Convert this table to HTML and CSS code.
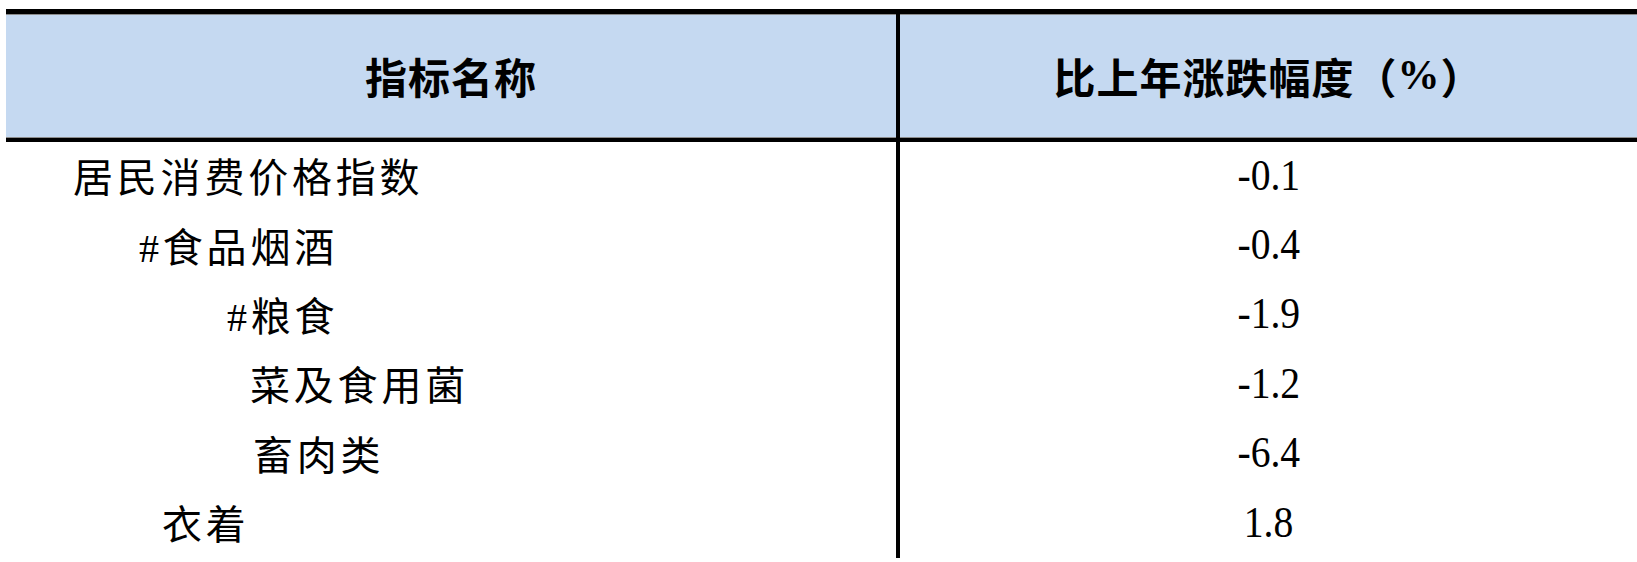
FILE: index.html
```html
<!DOCTYPE html>
<html lang="zh-CN">
<head>
<meta charset="utf-8">
<title>居民消费价格指数</title>
<link rel="stylesheet" href="styles.css">
</head>
<body>
<div class="table">
  <div class="head-row">
    <div class="hcell">指标名称</div>
    <div class="hcell hcell-right">比上年涨跌幅度（<span class="pct">%</span>）</div>
  </div>
  <div class="body">
    <div class="name lv1">居民消费价格指数</div><div class="val"><span class="num">-0.1</span></div>
    <div class="name lv2">#食品烟酒</div><div class="val"><span class="num">-0.4</span></div>
    <div class="name lv3">#粮食</div><div class="val"><span class="num">-1.9</span></div>
    <div class="name lv4">菜及食用菌</div><div class="val"><span class="num">-1.2</span></div>
    <div class="name lv5">畜肉类</div><div class="val"><span class="num">-6.4</span></div>
    <div class="name lv6">衣着</div><div class="val"><span class="num">1.8</span></div>
  </div>
</div>
</body>
</html>
```

FILE: styles.css
```css
html, body {
  margin: 0;
  padding: 0;
  background: #fff;
}
body {
  width: 1637px;
  height: 562px;
  overflow: hidden;
  font-family: "Liberation Serif", "Noto Sans CJK SC", serif;
  color: #000;
}
.table {
  margin: 9px 0 0 6px;
  width: 1631px;
}
.head-row {
  display: grid;
  grid-template-columns: 890px 1fr;
  height: 124px;
  background: #c5d9f1;
  border-top: 5px solid #000;
  border-bottom: 4px solid #000;
  box-shadow: inset 0 1px 0 #8c8c8c, inset 0 -1px 0 #8c8c8c;
}
.hcell {
  display: flex;
  align-items: center;
  justify-content: center;
  font-family: "Noto Sans CJK SC", sans-serif;
  font-weight: 700;
  font-size: 42px;
  letter-spacing: 1px;
  padding-bottom: 2px;
}
.hcell-right {
  border-left: 4px solid #000;
}
.pct {
  font-family: "Liberation Serif", serif;
  font-weight: 700;
}
.body {
  display: grid;
  grid-template-columns: 890px 1fr;
  grid-auto-rows: 69.4px;
  height: 417px;
}
.name {
  display: flex;
  align-items: center;
  font-size: 40px;
  letter-spacing: 3.8px;
  white-space: nowrap;
  padding-bottom: 3px;
}
.val {
  display: flex;
  align-items: center;
  justify-content: center;
  border-left: 4px solid #000;
  padding-bottom: 3px;
}
.num {
  display: inline-block;
  font-size: 44px;
  transform: scaleX(0.9);
}
.lv1 { padding-left: 67px; }
.lv2 { padding-left: 133px; }
.lv3 { padding-left: 221px; }
.lv4 { padding-left: 244px; }
.lv5 { padding-left: 247px; }
.lv6 { padding-left: 156px; }
```
